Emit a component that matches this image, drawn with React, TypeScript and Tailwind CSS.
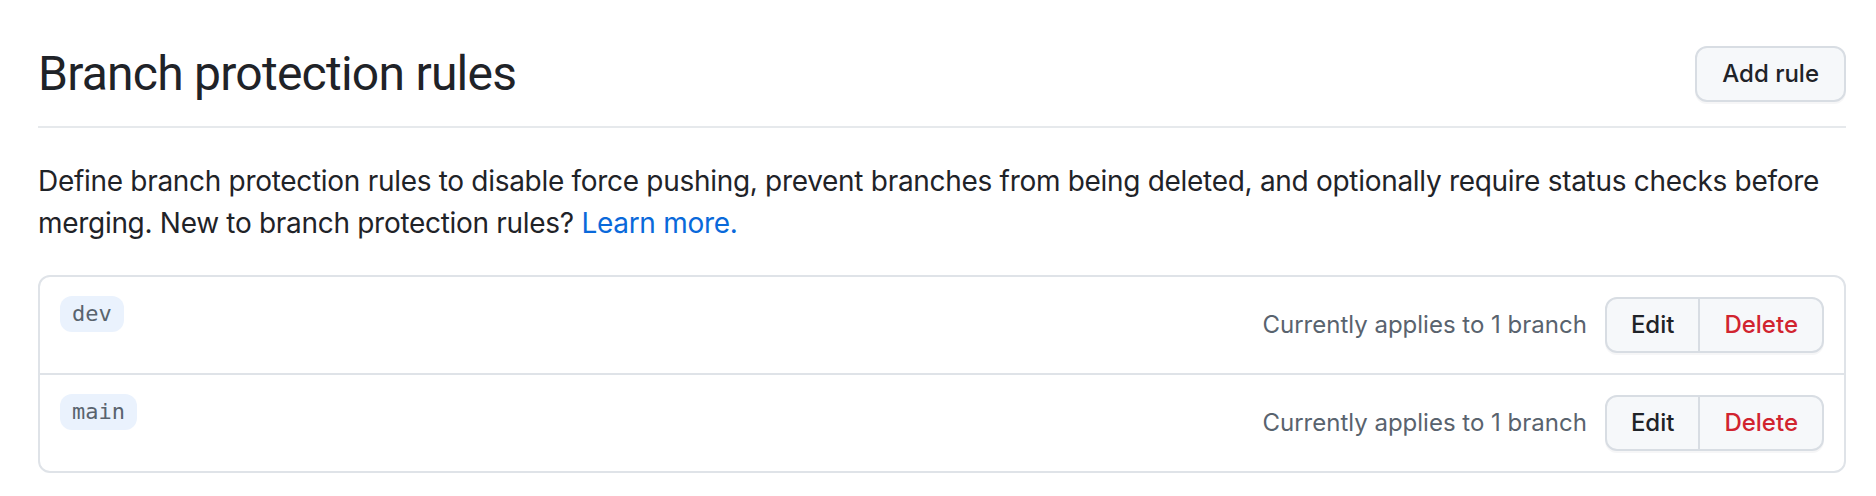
import React from 'react'

type Rule = { id: number; pattern: string; applies: string }

const RULES: Rule[] = [
  { id: 1, pattern: 'dev', applies: 'Currently applies to 1 branch' },
  { id: 2, pattern: 'main', applies: 'Currently applies to 1 branch' },
]

const SANS = { fontFamily: 'Inter, "Liberation Sans", Arial, sans-serif' }

function RuleRow({ rule, first }: { rule: Rule; first: boolean }) {
  return (
    <li
      className={`flex items-start justify-between p-[20px] ${first ? '' : 'border-t-2 border-[#dfe3e8]'}`}
    >
      <span
        className="mt-[-1px] rounded-[12px] bg-[#eaf2fd] px-[12px] py-[4px] text-[22px] leading-[28px] text-[#59636e]"
        style={{ fontFamily: '"DejaVu Sans Mono", "Liberation Mono", monospace' }}
      >
        {rule.pattern}
      </span>
      <div className="flex items-center gap-[18px]">
        <span className="text-[24px] leading-[32px] text-[#59636e]">{rule.applies}</span>
        <div className="flex h-[56px] overflow-hidden rounded-[12px] border-2 border-[#d8dde3] bg-[#f6f8fa] shadow-[0_2px_0_rgba(31,35,40,0.04)]">
          <button className="px-[24px] text-[24px] font-medium text-[#1f2328]">Edit</button>
          <button className="border-l-2 border-[#d8dde3] px-[24px] text-[24px] font-medium text-[#d1242f]">
            Delete
          </button>
        </div>
      </div>
    </li>
  )
}

export default function App() {
  return (
    <div className="min-h-[496px] bg-white pl-[38px] pr-[30px] pt-[44px]" style={SANS}>
      {/* Subhead */}
      <div className="flex items-center justify-between border-b-2 border-[#e6e9ec] pb-[22px]">
        <h2
          className="text-[48px] font-normal leading-[60px] tracking-[-0.75px] text-[#1f2328]"
          style={{ fontFamily: 'Roboto, "Liberation Sans", Arial, sans-serif' }}
        >
          Branch protection rules
        </h2>
        <button className="h-[56px] rounded-[12px] border-2 border-[#d8dde3] bg-[#f6f8fa] px-[25px] text-[24px] font-medium text-[#1f2328] shadow-[0_2px_0_rgba(31,35,40,0.04)]">
          Add rule
        </button>
      </div>

      <p className="mt-[32px] text-[28px] leading-[42px] tracking-[-0.3px] text-[#1f2328]">
        Define branch protection rules to disable force pushing, prevent branches from being deleted, and optionally
        require status checks before merging. New to branch protection rules?{' '}
        <a href="#" className="text-[#0969da]">
          Learn more.
        </a>
      </p>

      <ul className="mt-[31px] rounded-[12px] border-2 border-[#dfe3e8]">
        {RULES.map((r, i) => (
          <RuleRow key={r.id} rule={r} first={i === 0} />
        ))}
      </ul>
    </div>
  )
}
